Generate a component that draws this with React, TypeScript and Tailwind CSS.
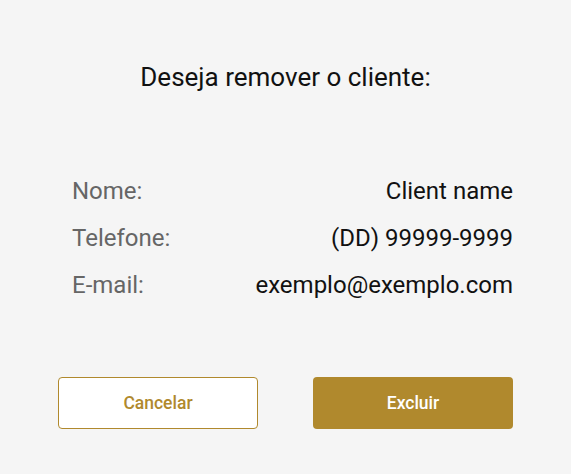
import React from 'react';

interface InfoRow {
  label: string;
  value: string;
}

const rows: InfoRow[] = [
  { label: 'Nome:', value: 'Client name' },
  { label: 'Telefone:', value: '(DD) 99999-9999' },
  { label: 'E-mail:', value: 'exemplo@exemplo.com' },
];

export default function App() {
  return (
    <div
      className="w-[571px] h-[474px] bg-[#f5f5f5] flex flex-col"
      style={{ fontFamily: 'Roboto, "Noto Sans", sans-serif' }}
    >
      {/* Title */}
      <h1 className="pt-[62px] text-center text-[26px] leading-[30px] text-[#111]">
        Deseja remover o cliente:
      </h1>

      {/* Client info */}
      <div className="mt-[85px] pl-[72px] pr-[58px] flex flex-col gap-[19px]">
        {rows.map((row) => (
          <div key={row.label} className="flex justify-between items-center h-[28px] text-[24px]">
            <span className="text-[#666]">{row.label}</span>
            <span className="text-[#111]">{row.value}</span>
          </div>
        ))}
      </div>

      {/* Actions */}
      <div className="mt-[78px] pl-[58px] pr-[58px] flex justify-between">
        <button className="w-[200px] h-[52px] rounded-[4px] border border-[#b0892d] bg-white text-[#b0892d] text-[17.5px] font-medium">
          Cancelar
        </button>
        <button className="w-[200px] h-[52px] rounded-[4px] bg-[#b0892d] text-white text-[17.5px] font-medium">
          Excluir
        </button>
      </div>
    </div>
  );
}
